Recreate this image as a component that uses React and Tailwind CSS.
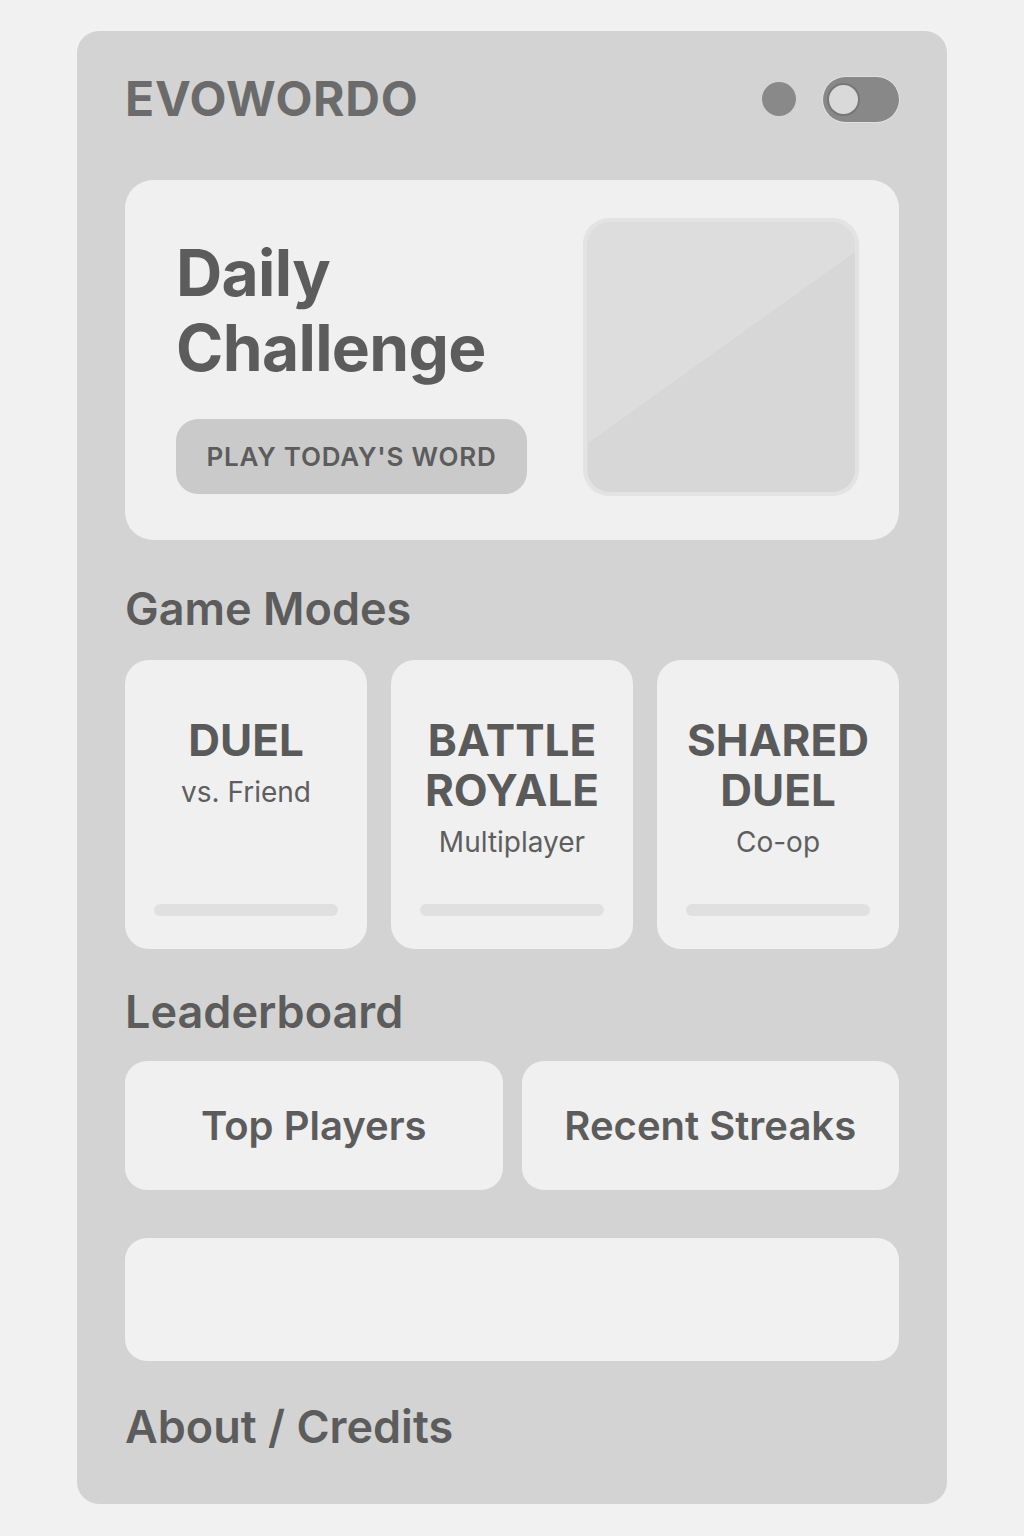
import React from "react";

const modes = [
  { title: ["DUEL"], sub: "vs. Friend" },
  { title: ["BATTLE", "ROYALE"], sub: "Multiplayer" },
  { title: ["SHARED", "DUEL"], sub: "Co-op" },
];

const boards = ["Top Players", "Recent Streaks"];

const font = { fontFamily: "Inter, 'Liberation Sans', sans-serif" };

const App = () => {
  return (
    <div
      className="min-h-screen w-full bg-[#f1f1f1] pt-[31px] pb-[32px]"
      style={font}
    >
      <div className="mx-auto w-[870px] rounded-[22px] bg-[#d3d3d3] px-12 pt-[46px] pb-[55px] text-[#5e5e5e]">
        {/* Header */}
        <div className="flex h-[44px] items-center justify-between">
          <h1 className="text-[48px] font-bold leading-none tracking-[0.015em] text-[#6b6b6b]">
            EVOWORDO
          </h1>
          <div className="flex items-center gap-[27px]">
            <div className="h-[34px] w-[34px] rounded-full bg-[#898989]" />
            <div className="flex h-[45px] w-[76px] items-center rounded-full bg-[#888888] pl-[4px] shadow-[0_0_0_1px_#e0e0e0]">
              <div className="h-[33px] w-[33px] rounded-full border-[2px] border-[#777] bg-[#d9d9d9]" />
            </div>
          </div>
        </div>

        {/* Daily challenge */}
        <div className="mt-[59px] flex h-[360px] items-start justify-between rounded-[28px] bg-[#f0f0f0] pl-[51px] pr-[40px] pt-[38px]">
          <div className="mt-[17px] flex flex-col items-start">
            <h2 className="text-[64px] font-bold leading-[75px] tracking-[-0.01em] text-[#5c5c5c]">
              Daily
              <br />
              Challenge
            </h2>
            <button className="mt-[34px] flex h-[75px] w-[351px] items-center justify-center rounded-[22px] bg-[#cacaca] text-[26px] font-semibold tracking-[0.03em] text-[#5c5c5c]">
              PLAY TODAY'S WORD
            </button>
          </div>
          <div className="h-[278px] w-[276px] rounded-[26px] bg-[#e3e3e3] p-[4px]">
            <svg
              viewBox="0 0 268 270"
              preserveAspectRatio="none"
              className="h-full w-full rounded-[23px]"
            >
              <rect width="268" height="270" fill="#dddddd" />
              <polygon points="1,221 268,30 268,270 1,270" fill="#d7d7d7" />
            </svg>
          </div>
        </div>

        {/* Game modes */}
        <h3 className="mt-[46px] text-[45px] font-semibold leading-none text-[#5c5c5c]">
          Game Modes
        </h3>
        <div className="mt-[29px] grid grid-cols-3 gap-6">
          {modes.map((mode) => (
            <div
              key={mode.sub}
              className="flex h-[289px] flex-col items-center rounded-[24px] bg-[#f0f0f0] pt-[55px] text-center"
            >
              <div className="text-[44px] font-bold leading-[50px] text-[#5a5a5a]">
                {mode.title.map((line) => (
                  <div key={line}>{line}</div>
                ))}
              </div>
              <div className="mt-[10px] text-[28px] leading-[34px] text-[#5e5e5e]">
                {mode.sub}
              </div>
              <div className="mx-[29px] mb-[33px] mt-auto h-[12px] self-stretch rounded-full bg-[#e0e0e0]" />
            </div>
          ))}
        </div>

        {/* Leaderboard */}
        <h3 className="mt-[40px] text-[45px] font-semibold leading-none text-[#5c5c5c]">
          Leaderboard
        </h3>
        <div className="mt-[27px] grid grid-cols-2 gap-[19px]">
          {boards.map((label) => (
            <div
              key={label}
              className="flex h-[129px] items-center justify-center rounded-[22px] bg-[#f0f0f0] text-[40px] font-semibold text-[#5c5c5c]"
            >
              {label}
            </div>
          ))}
        </div>

        <div className="mt-[48px] h-[123px] rounded-[22px] bg-[#f1f1f1]" />

        <h3 className="mt-[43px] text-[45px] font-semibold leading-none text-[#5c5c5c]">
          About / Credits
        </h3>
      </div>
    </div>
  );
};

export default App;
